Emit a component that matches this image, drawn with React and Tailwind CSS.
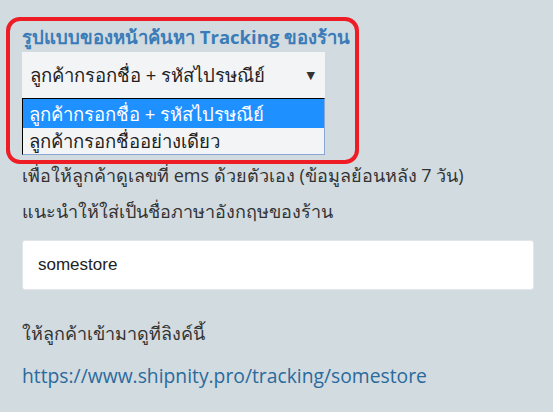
export default function App() {
  return (
    <div
      className="relative w-[553px] h-[412px] overflow-hidden bg-[#d2dbe0] text-[#333333]"
      style={{ fontFamily: '"Open Sans", "Noto Sans", "DejaVu Sans", sans-serif' }}
    >
      <div className="flex flex-col pl-[22px] pt-[25px]">
        <div className="text-[18.5px] font-bold leading-[24px] text-[#3b7cb8]">
          รูปแบบของหน้าค้นหา Tracking ของร้าน
        </div>
        <div className="mt-[3px] w-[303px] h-[46px] bg-[#f3f4f6] flex items-center justify-between pl-[8px] pr-[10px] text-[18.5px] text-[#222]">
          <span>ลูกค้ากรอกชื่อ + รหัสไปรษณีย์</span>
          <span className="text-[11px] text-[#333]">▼</span>
        </div>
        <div className="w-[303px] border border-t-black border-l-black border-r-[#8aa6d6] border-b-[#8aa6d6] flex flex-col text-[18.5px]">
          <div className="h-[29px] bg-[#1e90ff] text-white pl-[6px] flex items-center">
            ลูกค้ากรอกชื่อ + รหัสไปรษณีย์
          </div>
          <div className="h-[26px] bg-[#f3f4f6] text-[#222] pl-[6px] flex items-center">
            ลูกค้ากรอกชื่ออย่างเดียว
          </div>
        </div>
        <div className="mt-[7px] text-[18px] leading-[26px]">
          เพื่อให้ลูกค้าดูเลขที่ ems ด้วยตัวเอง (ข้อมูลย้อนหลัง 7 วัน)
        </div>
        <div className="mt-[10px] text-[18px] leading-[26px]">
          แนะนำให้ใส่เป็นชื่อภาษาอังกฤษของร้าน
        </div>
        <div
          className="mt-[16px] w-[512px] h-[50px] bg-white border border-[#e1e6ea] rounded-[3px] flex items-center pl-[15px] text-[17px] text-[#222]"
          style={{ fontFamily: '"Liberation Sans", Arial, sans-serif' }}
        >
          somestore
        </div>
        <div className="mt-[30px] text-[18px] leading-[26px]">ให้ลูกค้าเข้ามาดูที่ลิงค์นี้</div>
        <div className="mt-[17px] text-[19.3px] leading-[26px] text-[#2a6a9c]">
          https://www.shipnity.pro/tracking/somestore
        </div>
      </div>
      <div className="absolute left-[6px] top-[17px] w-[353px] h-[147px] border-[4px] border-[#ee1c25] rounded-[14px] pointer-events-none" />
    </div>
  );
}
